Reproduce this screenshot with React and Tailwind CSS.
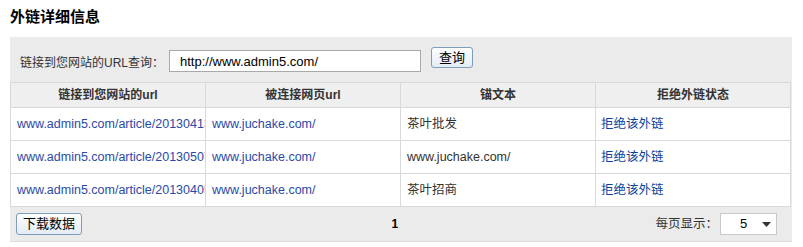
const rows = [
  { src: "www.admin5.com/article/20130413", target: "www.juchake.com/", anchor: "茶叶批发" },
  { src: "www.admin5.com/article/20130507", target: "www.juchake.com/", anchor: "www.juchake.com/" },
  { src: "www.admin5.com/article/20130405", target: "www.juchake.com/", anchor: "茶叶招商" },
];

const font = { fontFamily: '"Liberation Sans", "Noto Sans CJK SC", sans-serif' };

export default function App() {
  return (
    <div className="w-[803px] h-[247px] bg-white text-[12px] text-[#333]" style={font}>
      <div className="pl-[10px] pt-[6px] h-[37px] text-[15px] font-bold text-black">外链详细信息</div>

      <div className="ml-[10px] w-[782px] bg-[#ebebeb]">
        <div className="flex items-start h-[45px] pl-[10px]">
          <span className="w-[149px] mt-[17px]">链接到您网站的URL查询：</span>
          <input
            className="mt-[13px] w-[252px] h-[22px] border border-[#a9a9a9] bg-white pl-[10px] text-[13px] text-black outline-none"
            defaultValue="http://www.admin5.com/"
          />
          <button className="ml-[10px] mt-[10px] w-[42px] h-[21px] rounded-[3px] border border-[#7f9db9] bg-gradient-to-b from-[#fdfdfd] to-[#e3ecf5] text-[13px] leading-none text-black">
            查询
          </button>
        </div>

        <table className="w-[781px] table-fixed border-collapse">
          <thead>
            <tr className="h-[25px] bg-[#efefef]">
              {["链接到您网站的url", "被连接网页url", "锚文本", "拒绝外链状态"].map((h) => (
                <th key={h} className="border border-[#d9d9d9] font-bold text-[#333] text-center">
                  {h}
                </th>
              ))}
            </tr>
          </thead>
          <tbody>
            {rows.map((r, i) => (
              <tr key={i} className="h-[33px] bg-white">
                <td className="border border-[#d9d9d9] pl-[6px] overflow-hidden whitespace-nowrap text-[12.5px] text-[#2b4aa8]">
                  {r.src}
                </td>
                <td className="border border-[#d9d9d9] pl-[6px] whitespace-nowrap text-[12.5px] text-[#2b4aa8]">{r.target}</td>
                <td className="border border-[#d9d9d9] pl-[6px] whitespace-nowrap text-[12.5px] text-[#333]">{r.anchor}</td>
                <td className="border border-[#d9d9d9] pl-[5px] whitespace-nowrap text-[12.5px] text-[#0b3f9a]">拒绝该外链</td>
              </tr>
            ))}
          </tbody>
        </table>

        <div className="flex items-center h-[35px] pl-[6px] pr-[15px] border-b border-[#dcdcdc]">
          <button className="w-[66px] h-[22px] rounded-[3px] border border-[#7f9db9] bg-gradient-to-b from-[#fdfdfd] to-[#e3ecf5] text-[13px] text-black">
            下载数据
          </button>
          <div className="flex-1 text-center font-bold text-black pl-[52px]">1</div>
          <span className="text-[12.5px] text-[#333] mr-[2px]">每页显示：</span>
          <div className="flex items-center w-[57px] h-[22px] bg-white border border-[#c8c8c8] pl-[19px] pr-[5px] text-[13px] text-black">
            <span className="flex-1">5</span>
            <svg width="9" height="5" viewBox="0 0 9 5">
              <path d="M0 0h9L4.5 5z" fill="#333" />
            </svg>
          </div>
        </div>
      </div>
    </div>
  );
}
